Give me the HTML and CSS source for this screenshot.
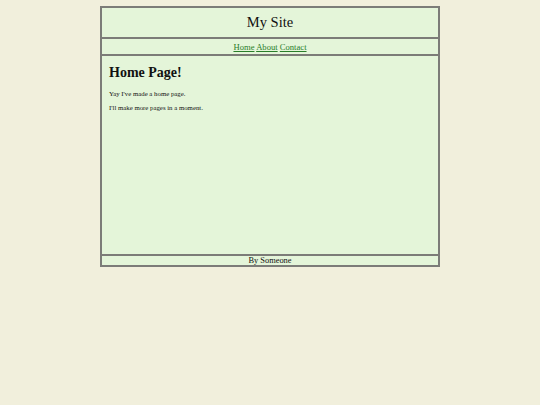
FILE: index.html
```html
<!DOCTYPE html>
<html>
<head>
<meta charset="utf-8">
<title>My Site</title>
<link rel="stylesheet" href="styles.css">
</head>
<body>
<div class="page">
  <header class="site-header">My Site</header>
  <nav class="site-nav"><a href="#">Home</a> <a href="#">About</a> <a href="#">Contact</a></nav>
  <main class="content">
    <h1>Home Page!</h1>
    <p>Yay I've made a home page.</p>
    <p>I'll make more pages in a moment.</p>
  </main>
  <footer class="site-footer">By Someone</footer>
</div>
</body>
</html>
```

FILE: styles.css
```css
html, body {
  margin: 0;
  padding: 0;
  background: #f1efdc;
  font-family: "Liberation Serif", "Times New Roman", serif;
  color: #111;
}
body {
  padding-top: 6px;
}
.page {
  width: 336px;
  margin: 0 auto;
  background: #e4f5d9;
  border: 2px solid #7c7c78;
}
.site-header {
  height: 29px;
  line-height: 28px;
  text-align: center;
  font-size: 14.5px;
  border-bottom: 2px solid #7c7c78;
}
.site-nav {
  height: 15px;
  line-height: 16px;
  text-align: center;
  font-size: 8.6px;
  border-bottom: 2px solid #7c7c78;
}
.site-nav a {
  color: #2a7d2a;
}
.content {
  height: 189px;
  padding: 9px 7px 0;
}
.content h1 {
  font-size: 14px;
  line-height: 16px;
  margin: 0 0 9px;
}
.content p {
  font-size: 6.8px;
  line-height: 8px;
  margin: 0 0 6px;
}
.site-footer {
  height: 9px;
  line-height: 9px;
  text-align: center;
  font-size: 8.4px;
  border-top: 2px solid #7c7c78;
}
```
